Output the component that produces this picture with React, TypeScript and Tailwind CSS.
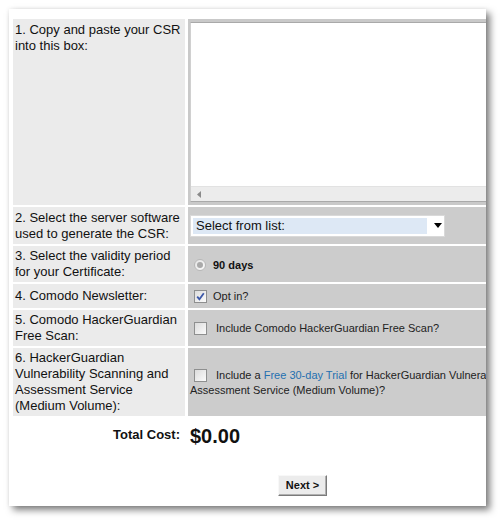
import React from "react";

const CheckBox = ({ checked = false }: { checked?: boolean }) => (
    <span className="relative inline-block w-[13px] h-[13px] shrink-0 border border-[#8e8f8f] bg-gradient-to-br from-[#dcdcdc] to-[#fbfbfb]">
        {checked && (
            <svg viewBox="0 0 11 11" className="absolute inset-0 w-[11px] h-[11px]">
                <path d="M2.2 5.6 L4.4 8.2 L8.8 2.2" fill="none" stroke="#3c58a8" strokeWidth="1.8" />
            </svg>
        )}
    </span>
);

const Radio = () => (
    <span className="inline-flex items-center justify-center w-[12px] h-[12px] rounded-full border border-[#b8b8b8] bg-gradient-to-br from-[#e4e4e4] to-[#fafafa] shrink-0">
        <span className="w-[6px] h-[6px] rounded-full bg-[#a9a9a9]" />
    </span>
);

export default function App() {
    return (
        <div className="w-[500px] h-[520px] bg-white pt-[9px] pl-[9px] font-['Liberation_Sans',Arial,sans-serif]">
            <div className="w-[477px] h-[497px] bg-white overflow-hidden shadow-[4px_4px_7px_rgba(0,0,0,0.5),0_0_4px_rgba(0,0,0,0.08)]">
                <div className="pt-[10px] pl-[4px]">
                    <div className="grid grid-cols-[172px_340px] grid-rows-[186px_37px_36px_24px_36px_68px] gap-x-[3px] gap-y-[2px] text-[13px] leading-[16px] text-[#111]">
                        {/* 1 */}
                        <div className="bg-[#ebebeb] pl-[2px] pt-[3px]">
                            1. Copy and paste your CSR
                            <br />
                            into this box:
                        </div>
                        <div className="bg-[#c9c9c9] pt-[3px] pl-[2px] pb-[3px]">
                            <div className="h-full border border-[#a9a9a9] border-l-[#d0d0d0] bg-white flex flex-col">
                                <div className="flex-1" />
                                <div className="h-[15px] bg-[#ececec] border-t border-[#e2e2e2] flex items-center pl-[6px]">
                                    <svg viewBox="0 0 4 7" className="w-[4px] h-[7px]">
                                        <path d="M4 0 L0 3.5 L4 7 Z" fill="#8a8a8a" />
                                    </svg>
                                </div>
                            </div>
                        </div>

                        {/* 2 */}
                        <div className="bg-[#ebebeb] pl-[2px] flex items-center">
                            <span>
                                2. Select the server software
                                <br />
                                used to generate the CSR:
                            </span>
                        </div>
                        <div className="bg-[#cccccc] flex items-center pl-[2px]">
                            <div className="w-[255px] h-[22px] bg-white border border-[#d9d9d9] flex items-center p-[2px]">
                                <div className="w-[235px] h-full bg-[#dde8f5] flex items-center pl-[3px]">Select from list:</div>
                                <svg viewBox="0 0 8 5" className="ml-[7px] w-[8px] h-[5px]">
                                    <path d="M0 0 L8 0 L4 5 Z" fill="#000" />
                                </svg>
                            </div>
                        </div>

                        {/* 3 */}
                        <div className="bg-[#ebebeb] pl-[2px] flex items-center">
                            <span>
                                3. Select the validity period
                                <br />
                                for your Certificate:
                            </span>
                        </div>
                        <div className="bg-[#cccccc] flex items-center pl-[6px] gap-[7px] text-[11px] font-bold text-[#111] pt-[2px]">
                            <Radio />
                            <span>90 days</span>
                        </div>

                        {/* 4 */}
                        <div className="bg-[#ebebeb] pl-[2px] flex items-center">4. Comodo Newsletter:</div>
                        <div className="bg-[#cccccc] flex items-center pl-[6px] gap-[6px] text-[11px] text-[#222]">
                            <CheckBox checked />
                            <span>Opt in?</span>
                        </div>

                        {/* 5 */}
                        <div className="bg-[#ebebeb] pl-[2px] flex items-center">
                            <span>
                                5. Comodo HackerGuardian
                                <br />
                                Free Scan:
                            </span>
                        </div>
                        <div className="bg-[#cccccc] flex items-center pl-[6px] gap-[9px] text-[11px] text-[#222]">
                            <CheckBox />
                            <span>Include Comodo HackerGuardian Free Scan?</span>
                        </div>

                        {/* 6 */}
                        <div className="bg-[#ebebeb] pl-[2px] flex items-center">
                            <span>
                                6. HackerGuardian
                                <br />
                                Vulnerability Scanning and
                                <br />
                                Assessment Service
                                <br />
                                (Medium Volume):
                            </span>
                        </div>
                        <div className="bg-[#cccccc] flex flex-col justify-center pl-[2px] text-[11px] leading-[15px] text-[#222] whitespace-nowrap pt-[2px]">
                            <div className="flex items-center pl-[4px] gap-[9px]">
                                <CheckBox />
                                <span>
                                    Include a <span className="text-[#2470b0]">Free 30-day Trial</span> for HackerGuardian Vulnerability Scanning and
                                </span>
                            </div>
                            <div>Assessment Service (Medium Volume)?</div>
                        </div>
                    </div>

                    {/* total */}
                    <div className="flex items-center h-[36px] mt-[1px]">
                        <div className="w-[167px] text-right text-[13px] font-bold text-[#111]">Total Cost:</div>
                        <div className="ml-[10px] text-[20px] font-bold text-[#111] leading-none pt-[2px]">$0.00</div>
                    </div>

                    <div className="pl-[265px] mt-[19px]">
                        <button className="w-[49px] h-[21px] bg-[#ececec] border border-[#f8f8f8] border-r-[#7a7a7a] border-b-[#7a7a7a] shadow-[inset_-1px_-1px_0_#b0b0b0] text-[11px] font-bold text-[#111]">
                            Next &gt;
                        </button>
                    </div>
                </div>
            </div>
        </div>
    );
}
